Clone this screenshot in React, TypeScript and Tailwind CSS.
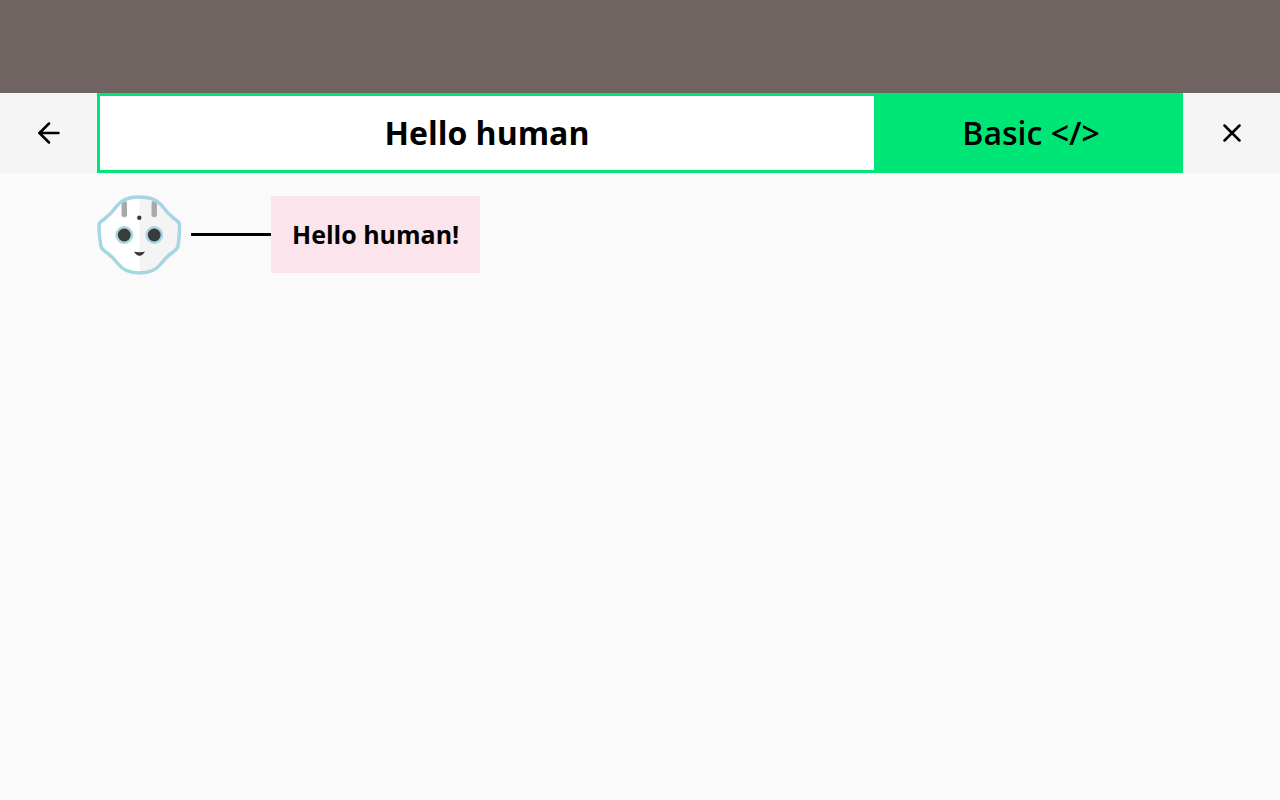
const font = "font-['Open_Sans',sans-serif]";

const outline =
    "M44 3C54 3 62 5.500 66.500 11.500C70.500 17 75.500 22 79.500 25C82.500 27 84.500 28 84.500 31C84.500 38 84 46 83 52C82.500 55 81 56 78 58C73.500 61 69.500 65 65.500 70C61 76 53 79 44 79C35 79 27 76 22.500 70C18.500 65 14.500 61 10 58C7 56 5.500 55 5 52C4 46 3 38 3 31C3 28 5.500 27 8.500 25C12.500 22 17.500 17 21.500 11.500C26 5.500 34 3 44 3Z";

function PepperFace() {
    return (
        <svg width="87" height="81" viewBox="0 0 88 81" preserveAspectRatio="none" fill="none" className="shrink-0">
            <path d={outline} fill="#ffffff" />
            <path
                d="M44 3C54 3 62 5.500 66.500 11.500C70.500 17 75.500 22 79.500 25C82.500 27 84.500 28 84.500 31C84.500 38 84 46 83 52C82.500 55 81 56 78 58C73.500 61 69.500 65 65.500 70C61 76 53 79 44 79Z"
                fill="#f4f4f4"
            />
            <path d="M28.600 9.500V20.500" stroke="#a9a9a9" strokeWidth="5.500" strokeLinecap="round" />
            <path d="M58.900 9.500V20.500" stroke="#a9a9a9" strokeWidth="5.500" strokeLinecap="round" />
            <path d={outline} stroke="#a5d6e2" strokeWidth="3.500" strokeLinejoin="round" />
            <circle cx="43.800" cy="23.700" r="2.200" fill="#3b3b3b" />
            <circle cx="28.600" cy="41" r="9" fill="#a5d6e2" />
            <circle cx="28.600" cy="41" r="6.500" fill="#3b3b3b" />
            <circle cx="58.900" cy="41" r="9" fill="#a5d6e2" />
            <circle cx="58.900" cy="41" r="6.500" fill="#3b3b3b" />
            <path d="M38.500 57.800C42 58.300 46 58.300 49.500 57.800C48 60.500 46 61.800 44 61.800C42 61.800 40 60.500 38.500 57.800Z" fill="#3b3b3b" />
        </svg>
    );
}

function ArrowIcon() {
    return (
        <svg width="22" height="22" viewBox="0 0 22 22" fill="none" stroke="#000000" strokeWidth="2.500" strokeLinecap="round" strokeLinejoin="round">
            <path d="M20.500 11H1.500" />
            <path d="M11 1.500L1.500 11L11 20.500" />
        </svg>
    );
}

function CloseIcon() {
    return (
        <svg width="18" height="18" viewBox="0 0 18 18" fill="none" stroke="#000000" strokeWidth="2.500" strokeLinecap="round">
            <path d="M1.500 1.500L16.500 16.500" />
            <path d="M16.500 1.500L1.500 16.500" />
        </svg>
    );
}

export default function App() {
    return (
        <div className={`w-full h-[800px] flex flex-col bg-[#fafafa] text-black ${font}`}>
            <div className="h-[93px] bg-[#6f6462]" />

            <div className="h-20 flex bg-[#f5f5f5]">
                <button className="w-[97px] flex items-center justify-center">
                    <ArrowIcon />
                </button>
                <div className="w-[780px] flex items-center justify-center bg-white border-[3px] border-[#00e676] text-[32px] font-bold">
                    Hello human
                </div>
                <div className="w-[306px] flex items-center justify-center pl-[2px] bg-[#00e676] text-[32px] font-semibold">
                    Basic &lt;/&gt;
                </div>
                <button className="w-[97px] flex items-center justify-center">
                    <CloseIcon />
                </button>
            </div>

            <div className="flex items-center pl-[96px] pt-[21px]">
                <PepperFace />
                <div className="w-20 h-[3px] ml-[8px] bg-black" />
                <div className="h-[77px] px-[21px] flex items-center bg-[#fce4ec] text-[25px] font-bold">
                    Hello human!
                </div>
            </div>
        </div>
    );
}
